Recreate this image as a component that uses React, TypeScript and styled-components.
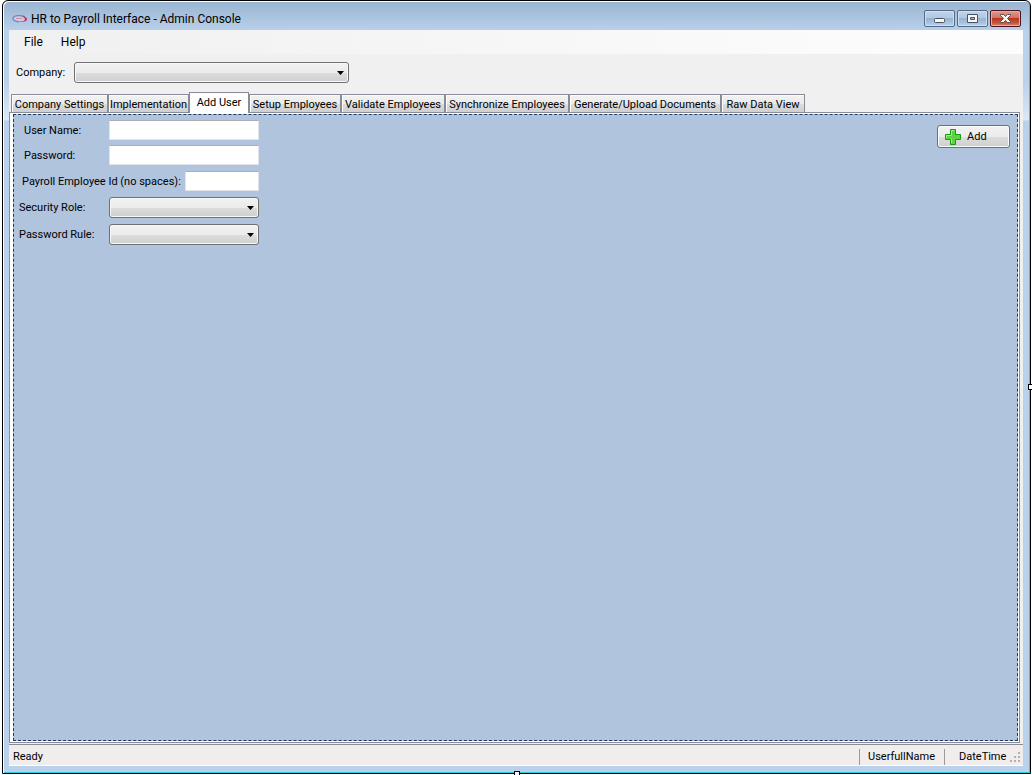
import React from 'react';
import styled, { createGlobalStyle, css } from 'styled-components';

const GlobalStyle = createGlobalStyle`
  *, *::before, *::after { box-sizing: border-box; }
  body {
    margin: 0;
    background: #fff;
    color: #000;
    font: 11px/16px Roboto, Arial, sans-serif;
  }
  button, input, select { font: inherit; color: inherit; margin: 0; }
`;

const Page = styled.div`
  height: 100vh;
  padding: 0 1px 1px 2px;
  display: flex;
`;

const Frame = styled.div`
  position: relative;
  flex: 1;
  min-width: 0;
  display: flex;
  flex-direction: column;
  padding: 0 7px 7px 6px;
  border: 1px solid #000;
  border-radius: 6px 6px 0 0;
  background: linear-gradient(#99b4d1 0, #b9d1ea 30px, #b9d1ea 80px, #dbe8f6 119px, #b9d1ea 120px);
  box-shadow: inset 1px 1px 0 #fff, inset -1px -1px 0 #35c9dc;
`;

const Grip = styled.span<{ $edge: 'right' | 'bottom' }>`
  position: absolute;
  width: 6px;
  height: 6px;
  border: 1px solid #000;
  background: #fff;
  ${(p) =>
    p.$edge === 'right'
      ? css`right: -4px; top: calc(50% - 3px);`
      : css`bottom: -4px; left: calc(50% - 3px);`}
`;

const TitleBar = styled.header`
  display: flex;
  height: 29px;
  padding-left: 3px;
  align-items: center;
  gap: 3px;
`;

const Title = styled.h1`
  flex: 1;
  margin: 0;
  padding-top: 6px;
  font: 400 12px/16px Roboto, sans-serif;
`;

const Logo = styled.svg`
  width: 16px;
  height: 16px;
  margin-top: 6px;
`;

const Caption = styled.div`
  display: flex;
  align-self: flex-start;
  gap: 2px;
  padding: 9px 2px 0 0;
`;

const CaptionButton = styled.button<{ $close?: boolean }>`
  display: flex;
  width: 31px;
  height: 17px;
  padding: 0;
  align-items: center;
  justify-content: center;
  border: 1px solid ${(p) => (p.$close ? '#4c1420' : '#536b87')};
  border-radius: 2px;
  background: ${(p) =>
    p.$close
      ? 'linear-gradient(#dc9a8f 0, #cf7567 45%, #b83820 50%, #c4573b 80%, #d48a70 100%)'
      : 'linear-gradient(#c0d3e8 0, #b3c9e1 45%, #98b4d2 50%, #a8c3e0 80%, #bdd6ee 100%)'};
  box-shadow: inset 0 0 0 1px ${(p) => (p.$close ? '#e5aca0' : '#cfdff0')};
`;

const Client = styled.main`
  flex: 1;
  min-height: 0;
  display: flex;
  flex-direction: column;
  background: #f0f0f0;
`;

const MenuBar = styled.nav`
  display: flex;
  height: 24px;
  padding-left: 9px;
  align-items: center;
  background: linear-gradient(90deg, #f0f0f0, #fcfcfc 90%);
`;

const MenuItem = styled.button`
  padding: 0 6px;
  border: 0;
  background: none;
  font: 12px/16px Roboto, sans-serif;
  & + & { margin-left: 6px; }
`;

const CompanyRow = styled.div`
  display: flex;
  height: 37px;
  padding-left: 7px;
  align-items: center;
`;

const Label = styled.label<{ $width: number; $indent?: number }>`
  width: ${(p) => p.$width}px;
  padding-left: ${(p) => p.$indent ?? 0}px;
  white-space: nowrap;
`;

const Combo = styled.span<{ $width: number }>`
  position: relative;
  display: flex;
  width: ${(p) => p.$width}px;
`;

const Select = styled.select`
  appearance: none;
  width: 100%;
  height: 21px;
  padding: 0 20px 0 6px;
  border: 1px solid #707070;
  border-radius: 3px;
  background: linear-gradient(#f2f2f2 0, #ebebeb 50%, #dddddd 51%, #cfcfcf 100%);
  box-shadow: inset 0 0 0 1px #f8f8f8;
`;

const Arrow = styled.svg`
  position: absolute;
  right: 5px;
  top: 9px;
  width: 7px;
  height: 4px;
  pointer-events: none;
`;

const Tabs = styled.div`
  display: flex;
  height: 21px;
  padding-left: 2px;
  align-items: flex-end;
`;

const Tab = styled.button<{ $width: number; $active?: boolean }>`
  width: ${(p) => p.$width}px;
  height: 18px;
  padding: 2px 0 0;
  border: 1px solid #898c95;
  border-bottom: 0;
  background: linear-gradient(#f2f2f2 0, #ebebeb 50%, #dddddd 51%, #cfcfcf 100%);
  box-shadow: inset 1px 1px 0 #fcfcfc;
  line-height: 15px;
  white-space: nowrap;
  ${(p) =>
    p.$active &&
    css`
      position: relative;
      height: 21px;
      padding: 0 0 1px;
      margin-bottom: -1px;
      background: #fff;
    `}
`;

const TabPage = styled.section`
  flex: 1;
  min-height: 0;
  display: flex;
  margin-right: 3px;
  padding: 1px 1px 1px 3px;
  border: 1px solid #898c95;
  background: #fff;
`;

const Panel = styled.form`
  flex: 1;
  display: flex;
  justify-content: space-between;
  align-items: flex-start;
  border: 1px dashed #1f3864;
  background: #b0c4de;
`;

const Fields = styled.div`
  display: flex;
  flex-direction: column;
  padding: 5px 0 0 5px;
`;

const Field = styled.div<{ $height: number }>`
  display: flex;
  height: ${(p) => p.$height}px;
  align-items: flex-start;
  & > label { line-height: 22px; }
`;

const TextBox = styled.input<{ $width: number }>`
  width: ${(p) => p.$width}px;
  height: 20px;
  padding: 1px 3px;
  border: 1px solid #e2e3ea;
  border-top-color: #abadb3;
  border-radius: 1px;
  background: #fff;
`;

const AddButton = styled.button`
  display: flex;
  width: 73px;
  height: 23px;
  margin: 10px 7px 0 0;
  padding: 0 7px;
  align-items: center;
  gap: 6px;
  border: 1px solid #707070;
  border-radius: 3px;
  background: linear-gradient(#f2f2f2 0, #ebebeb 50%, #dddddd 51%, #cfcfcf 100%);
  box-shadow: inset 0 0 0 1px #fcfcfc;
`;

const StatusBar = styled.footer`
  display: flex;
  height: 22px;
  margin-top: 1px;
  padding: 3px 0 0 4px;
  align-items: center;
  border-top: 1px solid #898c95;
  border-bottom: 1px solid #fff;
  background: #f1eded;
  & > :first-child { flex: 1; }
`;

const StatusCell = styled.span<{ $width: number; $indent: number }>`
  width: ${(p) => p.$width}px;
  padding-left: ${(p) => p.$indent}px;
  border-left: 1px solid #9a9a9a;
  line-height: 16px;
`;

const TABS: [string, number][] = [
  ['Company Settings', 97],
  ['Implementation', 81],
  ['Add User', 60],
  ['Setup Employees', 92],
  ['Validate Employees', 104],
  ['Synchronize Employees', 124],
  ['Generate/Upload Documents', 152],
  ['Raw Data View', 84],
];

function ComboBox({ id, width }: { id: string; width: number }) {
  return (
    <Combo $width={width}>
      <Select id={id} />
      <Arrow viewBox="0 0 7 4" aria-hidden="true"><path d="M0 0h7L3.5 4z" /></Arrow>
    </Combo>
  );
}

export default function App() {
  return (
    <>
      <GlobalStyle />
      <Page>
        <Frame>
          <TitleBar>
            <Logo viewBox="0 0 16 16" aria-hidden="true">
              <ellipse cx="7.500" cy="8" rx="6.500" ry="3" fill="#c9cde2" />
              <path d="M13 5.800C9 3.600 1 4.500 1 7.500c0 2 3 3 6 3.300" fill="none" stroke="#7088c0" strokeWidth="1.300" />
              <path d="M9 5.200c3 0 6 1 6 3s-4 3.300-9 2.500c4 0 7-.8 7-2.500S11 6 9 5.200z" fill="#cf2148" />
              <path d="M4 7.500h6" stroke="#d88ca0" />
            </Logo>
            <Title>HR to Payroll Interface - Admin Console</Title>
            <Caption>
              <CaptionButton aria-label="Minimize">
                <svg width="11" height="11" aria-hidden="true">
                  <rect x=".5" y="5.500" width="10" height="4" rx="1" fill="#f7f7f7" stroke="#4a5260" />
                </svg>
              </CaptionButton>
              <CaptionButton aria-label="Maximize">
                <svg width="11" height="9" aria-hidden="true">
                  <path d="M.5.5h10v8H.5z" fill="#f7f7f7" stroke="#4a5260" />
                  <path d="M3.500 3.500h4v2h-4z" fill="#a3bddb" stroke="#4a5260" />
                </svg>
              </CaptionButton>
              <CaptionButton $close aria-label="Close">
                <svg width="11" height="9" aria-hidden="true">
                  <path d="M.5.5h3l2 2 2-2h3v1l-3 3 3 3v1h-3l-2-2-2 2h-3v-1l3-3-3-3z" fill="#f7f7f7" stroke="#56505c" />
                </svg>
              </CaptionButton>
            </Caption>
          </TitleBar>
          <Client>
            <MenuBar>
              <MenuItem>File</MenuItem>
              <MenuItem>Help</MenuItem>
            </MenuBar>
            <CompanyRow>
              <Label htmlFor="company" $width={58}>Company:</Label>
              <ComboBox id="company" width={275} />
            </CompanyRow>
            <Tabs role="tablist">
              {TABS.map(([name, width]) => (
                <Tab key={name} role="tab" aria-selected={name === 'Add User'} $width={width} $active={name === 'Add User'}>
                  {name}
                </Tab>
              ))}
            </Tabs>
            <TabPage>
              <Panel onSubmit={(e) => e.preventDefault()}>
                <Fields>
                  <Field $height={25}>
                    <Label htmlFor="user" $width={90} $indent={5}>User Name:</Label>
                    <TextBox id="user" $width={150} />
                  </Field>
                  <Field $height={26}>
                    <Label htmlFor="password" $width={90} $indent={5}>Password:</Label>
                    <TextBox id="password" type="password" $width={150} />
                  </Field>
                  <Field $height={26}>
                    <Label htmlFor="employee" $width={166} $indent={3}>Payroll Employee Id (no spaces):</Label>
                    <TextBox id="employee" $width={74} />
                  </Field>
                  <Field $height={27}>
                    <Label htmlFor="role" $width={90}>Security Role:</Label>
                    <ComboBox id="role" width={150} />
                  </Field>
                  <Field $height={27}>
                    <Label htmlFor="rule" $width={90}>Password Rule:</Label>
                    <ComboBox id="rule" width={150} />
                  </Field>
                </Fields>
                <AddButton type="submit">
                  <svg width="16" height="16" aria-hidden="true">
                    <path d="M5.500.5h5v5h5v5h-5v5h-5v-5h-5v-5h5z" fill="#5bd443" stroke="#179a12" />
                    <path d="M6.500 9.500V14M1.500 9V6.500h5v-5h3" fill="none" stroke="#a5f08c" />
                  </svg>
                  Add
                </AddButton>
              </Panel>
            </TabPage>
            <StatusBar>
              <span>Ready</span>
              <StatusCell $width={85} $indent={8}>UserfullName</StatusCell>
              <StatusCell $width={65} $indent={14}>DateTime</StatusCell>
              <svg width="14" height="12" aria-hidden="true">
                <path d="M9 1h2v2H9zM5 5h2v2H5zM9 5h2v2H9zM1 9h2v2H1zM5 9h2v2H5zM9 9h2v2H9z" fill="#b5b1b1" />
              </svg>
            </StatusBar>
          </Client>
          <Grip $edge="right" />
          <Grip $edge="bottom" />
        </Frame>
      </Page>
    </>
  );
}
